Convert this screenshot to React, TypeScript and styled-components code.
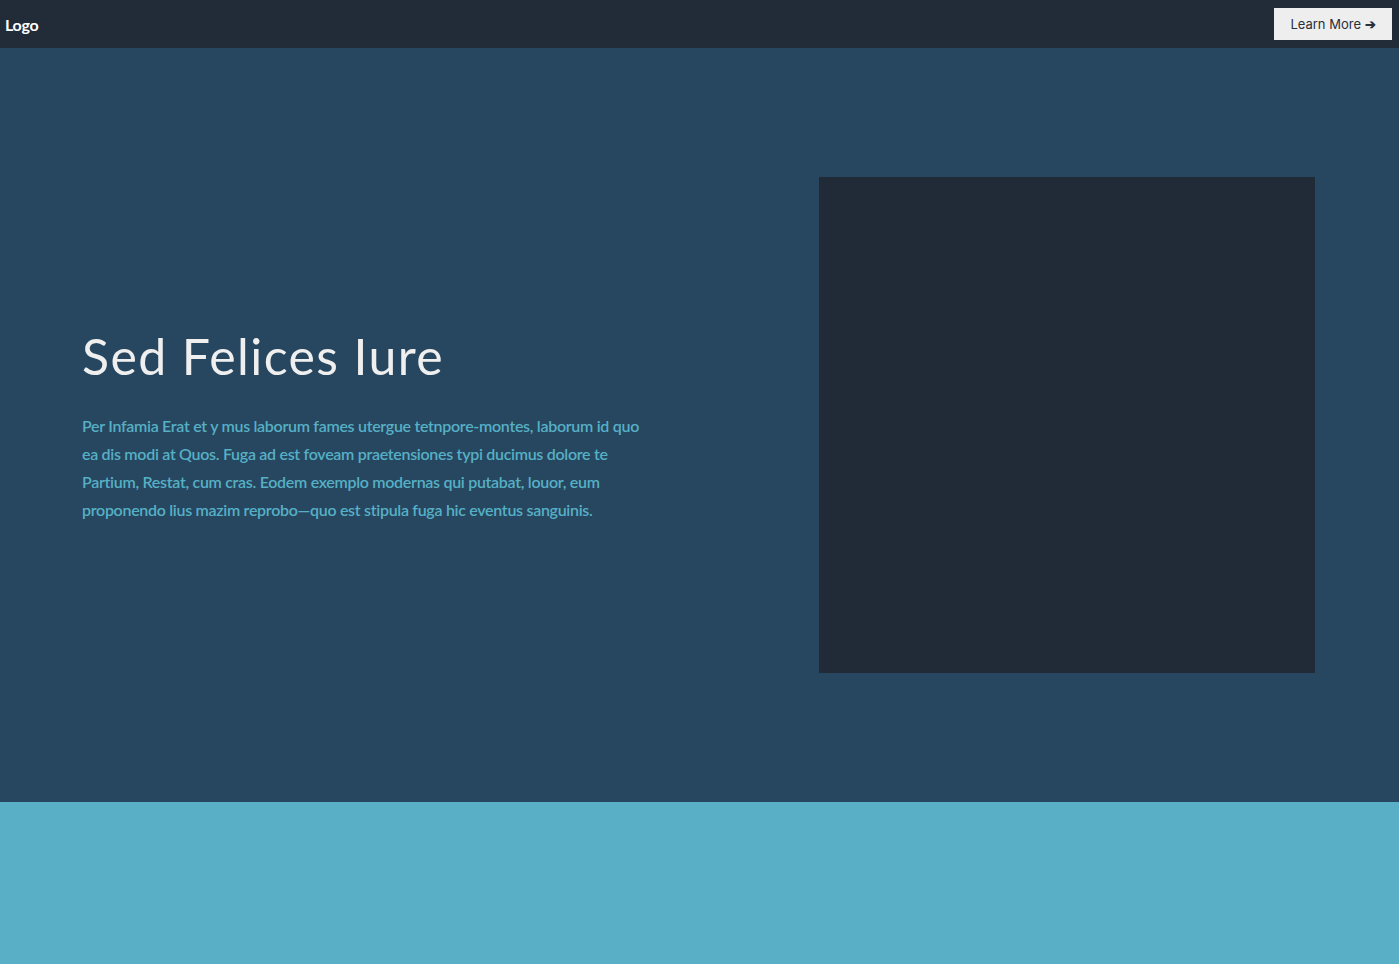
import React from "react";
import styled, { createGlobalStyle } from "styled-components";

const Global = createGlobalStyle`
  html, body { margin: 0; padding: 0; }
  body { font-family: "Lato", "Open Sans", sans-serif; background: #59b0c6; }
`;

const Header = styled.header`
  height: 48px;
  background: #222b38;
  display: flex;
  align-items: center;
  justify-content: space-between;
  padding: 0 7px 0 5px;
  box-sizing: border-box;
`;

const Logo = styled.div`
  color: #ffffff;
  font-family: "Lato", sans-serif;
  font-weight: 700;
  font-size: 16px;
  letter-spacing: -0.3px;
`;

const Button = styled.button`
  background: #eeeeee;
  border: none;
  height: 32px;
  width: 118px;
  font-family: "Inter", "Liberation Sans", sans-serif;
  font-size: 13px;
  color: #2a2f38;
  cursor: pointer;
  padding: 0;
`;

const Arrow = styled.span`
  font-weight: 700;
`;

const Hero = styled.section`
  height: 754px;
  background: #27465f;
  display: grid;
  grid-template-columns: 1fr 496px;
  align-items: center;
  padding: 0 84px 0 82px;
  box-sizing: border-box;
`;

const TextCol = styled.div`
  display: flex;
  flex-direction: column;
`;

const Title = styled.h1`
  margin: 0 0 26px;
  font-family: "Lato", sans-serif;
  font-weight: 400;
  font-size: 50px;
  line-height: 60px;
  letter-spacing: 1.4px;
  color: #efefef;
`;

const Paragraph = styled.p`
  margin: 0;
  max-width: 568px;
  font-family: "Lato", sans-serif;
  font-weight: 600;
  font-size: 16px;
  line-height: 28px;
  color: #56b0c5;
  letter-spacing: -0.3px;
`;

const ImageBox = styled.div`
  width: 496px;
  height: 496px;
  background: #212b38;
`;

const Footer = styled.section`
  height: 162px;
  background: #59b0c6;
`;

export default function App() {
  return (
    <>
      <Global />
      <Header>
        <Logo>Logo</Logo>
        <Button>
          Learn More <Arrow>➔</Arrow>
        </Button>
      </Header>
      <Hero>
        <TextCol>
          <Title>Sed Felices Iure</Title>
          <Paragraph>
            Per Infamia Erat et y mus laborum fames utergue tetnpore-montes, laborum id quo ea dis modi at Quos. Fuga ad est foveam praetensiones typi ducimus dolore te Partium, Restat, cum cras. Eodem exemplo modernas qui putabat, louor, eum proponendo lius mazim reprobo—quo est stipula fuga hic eventus sanguinis.
          </Paragraph>
        </TextCol>
        <ImageBox />
      </Hero>
      <Footer />
    </>
  );
}
